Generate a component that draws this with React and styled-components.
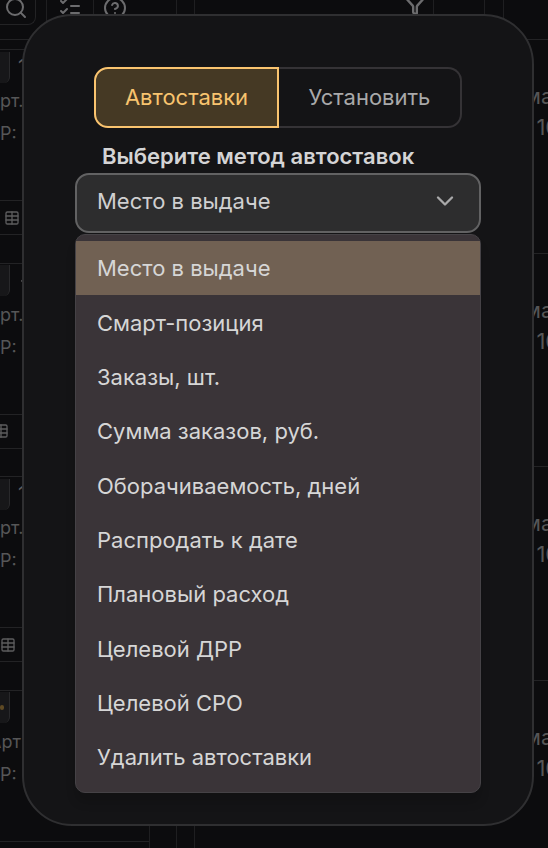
import { useState } from "react";
import styled, { createGlobalStyle } from "styled-components";
import { ArrowUp, ChevronDown, CircleHelp, Funnel, ListChecks, Search, Table } from "lucide-react";

const GlobalStyle = createGlobalStyle`
  html, body {
    margin: 0;
    padding: 0;
    background: #0c0c0e;
  }
  * {
    box-sizing: border-box;
  }
`;

const Page = styled.div`
  position: relative;
  width: 548px;
  height: 848px;
  overflow: hidden;
  background: #0c0c0e;
  color: #565657;
  font-family: Inter, "Liberation Sans", sans-serif;
`;

const Header = styled.div`
  display: grid;
  grid-template-columns: 47px 47px 83px 18px 239px 51px 19px 1fr;
  height: 40px;
  border-bottom: 1px solid #232325;
`;

const HeadCell = styled.div`
  display: flex;
  align-items: flex-start;
  justify-content: ${(p) => p.$justify || "flex-start"};
  padding: ${(p) => p.$pad || "0"};
  border-right: 1px solid #1f1f21;
  color: #6c6c6e;
`;

const SearchBox = styled.div`
  width: 36px;
  height: 29px;
  padding-left: 4px;
  margin-top: -4px;
  border-right: 1px solid #232325;
  border-bottom: 1px solid #232325;
  border-bottom-right-radius: 8px;
`;

const Row = styled.div`
  display: grid;
  grid-template-columns: 150px 27px 18px 1fr;
  height: 213.5px;
`;

const LeftCell = styled.div`
  display: flex;
  flex-direction: column;
  border-right: 1px solid #1f1f21;
`;

const TopStrip = styled.div`
  height: 10px;
  border-bottom: 1px solid #232325;
`;

const Body = styled.div`
  height: 151px;
  border-bottom: 1px solid #232325;
`;

const ThumbLine = styled.div`
  display: flex;
  align-items: center;
  gap: 8px;
  height: 32px;
  margin-top: 1px;
  font-size: 20px;
  color: #5e5e60;
`;

const Thumb = styled.div`
  position: relative;
  width: 10px;
  height: 31px;
  background: #171719;
  border-right: 1px solid #29292b;
  border-radius: 0 0 6px 0;

  &::after {
    content: "";
    display: ${(p) => (p.$dot ? "block" : "none")};
    position: absolute;
    left: 0;
    top: 13px;
    width: 4px;
    height: 5px;
    border-radius: 2px;
    background: #5f4a24;
  }
`;

const Muted = styled.div`
  height: 32px;
  margin-top: ${(p) => p.$top}px;
  margin-left: ${(p) => p.$shift || 0}px;
  font-size: 18px;
  line-height: 32px;
  white-space: nowrap;
  color: #565657;
`;

const Footer = styled.div`
  display: flex;
  align-items: center;
  height: 34px;
  padding-left: ${(p) => p.$indent}px;
  border-bottom: 1px solid #232325;
  color: #5c5c5e;
  overflow: hidden;
`;

const LineCell = styled.div`
  border-right: 1px solid #1f1f21;
`;

const RightCell = styled.div`
  padding: 41px 0 0 329px;
  border-bottom: 1px solid #232325;
  font-size: 22px;
  line-height: 31px;
  white-space: nowrap;
  color: #565657;
`;

const Modal = styled.div`
  position: absolute;
  top: 14px;
  left: 22px;
  display: flex;
  justify-content: center;
  width: 512px;
  height: 812px;
  padding-top: 51px;
  background: #141416;
  border: 2px solid #2f2f31;
  border-radius: 50px;
`;

const Column = styled.div`
  display: flex;
  flex-direction: column;
  width: 406px;
`;

const Toggle = styled.div`
  display: flex;
  align-self: center;
  width: 368px;
  height: 61px;
`;

const Tab = styled.button`
  flex: 1;
  padding: 0 0 2px;
  font: 400 22px Inter, "Liberation Sans", sans-serif;
  cursor: pointer;
  color: ${(p) => (p.$active ? "#f8c46f" : "#a9a9aa")};
  background: ${(p) => (p.$active ? "#453924" : "transparent")};
  border: ${(p) => (p.$active ? "2px solid #fac46f" : "2px solid #353336")};
  border-left-width: ${(p) => (p.$active ? "2px" : "0")};
  border-radius: ${(p) => (p.$active ? "14px 0 0 14px" : "0 14px 14px 0")};
`;

const Label = styled.div`
  margin: 16px 0 5px 27px;
  font-size: 22px;
  font-weight: 600;
  line-height: 24px;
  color: #d4d4d5;
`;

const Select = styled.button`
  display: flex;
  align-items: center;
  justify-content: space-between;
  width: 100%;
  height: 60px;
  padding: 0 20px 4px 20px;
  font: 400 22px Inter, "Liberation Sans", sans-serif;
  color: #d0d0d1;
  text-align: left;
  cursor: pointer;
  background: #2d2d2e;
  border: 2px solid #626263;
  border-radius: 14px;
`;

const Menu = styled.ul`
  height: 559px;
  margin: 1px 0 0;
  padding: 6px 0 0;
  list-style: none;
  background: #3a3438;
  border: 1px solid #454246;
  border-radius: 10px;
  box-shadow: 0 10px 10px rgba(0, 0, 0, 0.14);
`;

const Option = styled.li`
  display: flex;
  align-items: center;
  height: 54.35px;
  padding-left: 21px;
  font-size: 22px;
  color: #d6d6d6;
  cursor: pointer;
  background: ${(p) => (p.$active ? "#716153" : "transparent")};
`;

const rows = [
  { top: "1", art: "рт.", rate: "Р: 9", indent: 4 },
  { top: "↑", art: "рт.", rate: "Р:", indent: -7 },
  { top: "1", art: "рт.", rate: "Р: 9", indent: 0 },
  { top: "", art: "Арт", shift: -11, rate: "Р: 9", indent: 0, dot: true },
];

const methods = [
  "Место в выдаче",
  "Смарт-позиция",
  "Заказы, шт.",
  "Сумма заказов, руб.",
  "Оборачиваемость, дней",
  "Распродать к дате",
  "Плановый расход",
  "Целевой ДРР",
  "Целевой СРО",
  "Удалить автоставки",
];

const App = () => {
  const [tab, setTab] = useState("auto");
  const [method, setMethod] = useState(methods[0]);

  return (
    <Page>
      <GlobalStyle />
      <Header>
        <HeadCell>
          <SearchBox>
            <Search size={24} strokeWidth={2} />
          </SearchBox>
        </HeadCell>
        <HeadCell $pad="0 0 0 11px">
          <ListChecks size={24} strokeWidth={2} style={{ marginTop: -6 }} />
        </HeadCell>
        <HeadCell $pad="0 0 0 9px">
          <CircleHelp size={24} strokeWidth={2} style={{ marginTop: -4 }} />
        </HeadCell>
        <HeadCell />
        <HeadCell $justify="flex-end" $pad="0 7px 0 0">
          <Funnel size={22} strokeWidth={2.6} style={{ marginTop: -6 }} />
        </HeadCell>
        <HeadCell />
        <HeadCell />
      </Header>

      {rows.map((row, i) => (
        <Row key={i}>
          <LeftCell>
            <TopStrip />
            <Body>
              <ThumbLine>
                <Thumb $dot={row.dot} />
                {row.top === "↑" ? <ArrowUp size={18} /> : row.top}
              </ThumbLine>
              <Muted $top={2} $shift={row.shift}>
                {row.art}
              </Muted>
              <Muted $top={1}>{row.rate}</Muted>
            </Body>
            <Footer $indent={Math.max(row.indent, 0)}>
              <Table size={16} strokeWidth={2} style={{ flexShrink: 0, marginLeft: Math.min(row.indent, 0) }} />
            </Footer>
          </LeftCell>
          <LineCell />
          <LineCell />
          <RightCell>
            ма
            <br />
            &nbsp;&nbsp;10
          </RightCell>
        </Row>
      ))}

      <Modal>
        <Column>
          <Toggle>
            <Tab $active={tab === "auto"} onClick={() => setTab("auto")}>
              Автоставки
            </Tab>
            <Tab onClick={() => setTab("set")}>Установить</Tab>
          </Toggle>
          <Label>Выберите метод автоставок</Label>
          <Select>
            {method}
            <ChevronDown size={28} strokeWidth={2} color="#a9a9aa" />
          </Select>
          <Menu>
            {methods.map((m) => (
              <Option key={m} $active={m === method} onClick={() => setMethod(m)}>
                {m}
              </Option>
            ))}
          </Menu>
        </Column>
      </Modal>
    </Page>
  );
};

export default App;
